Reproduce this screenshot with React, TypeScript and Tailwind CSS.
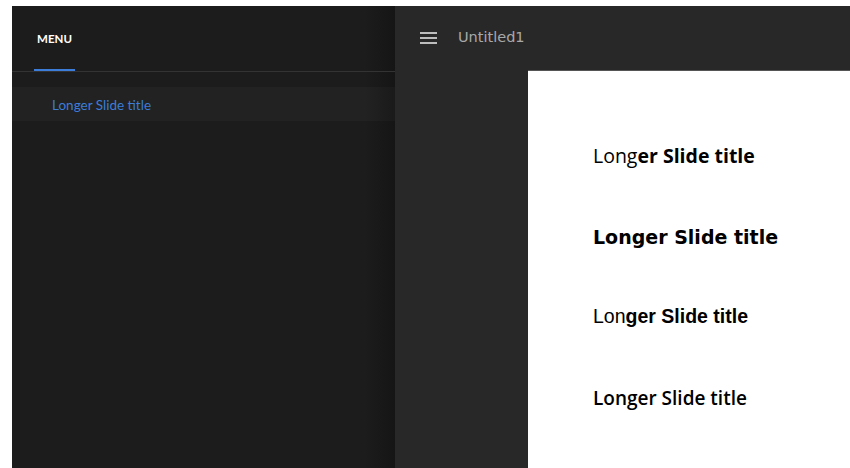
export default function App() {
  return (
    <div className="flex h-[468px] w-[850px] overflow-hidden bg-white pl-[12px] pt-[6px]">
      <aside className="flex w-[383px] shrink-0 flex-col bg-[#1c1c1c] bg-[linear-gradient(to_right,#1c1c1c_calc(100%-30px),#151515)] font-['Lato',sans-serif]">
        <div className="flex h-[66px] border-b border-[#333] pl-[22px]">
          <div className="flex h-full w-[41px] items-center justify-center border-b-2 border-[#3b7dd8]">
            <span className="pt-[3px] text-[11.5px] font-bold text-white">MENU</span>
          </div>
        </div>
        <div className="mt-[15px] flex h-[34px] items-center bg-[#222] bg-[linear-gradient(to_right,#222_calc(100%-30px),#1a1a1a)] pl-[40px] pt-[2px] text-[13.5px] text-[#3b7dd8]">
          Longer Slide title
        </div>
      </aside>
      <main className="flex flex-1 flex-col bg-[#282828]">
        <header className="flex h-[64px] shrink-0 items-center pl-[25px]">
          <div className="flex w-[17px] flex-col gap-[3px]">
            <span className="h-[2px] bg-[#bdbdbd]" />
            <span className="h-[2px] bg-[#bdbdbd]" />
            <span className="h-[2px] bg-[#bdbdbd]" />
          </div>
          <span className="ml-[21px] font-['DejaVu_Sans',sans-serif] text-[14.5px] text-[#a8a8a8]">Untitled1</span>
        </header>
        <div className="flex flex-1">
          <div className="w-[133px] shrink-0" />
          <div className="flex-1 border-t border-[#555] bg-white pl-[65px] text-black">
            <p className="mt-[73px] font-['Open_Sans',sans-serif] text-[19.5px] leading-[24px]">
              <span>Long</span>
              <span className="font-bold">er Slide title</span>
            </p>
            <p className="mt-[57px] font-['DejaVu_Sans',sans-serif] text-[19px] leading-[24px]">
              <span className="font-semibold">Longer </span>
              <span className="font-bold">Slide title</span>
            </p>
            <p className="mt-[55px] font-['Liberation_Sans',sans-serif] text-[19.5px] leading-[24px]">
              <span>Lon</span>
              <span className="font-bold">ger Slide title</span>
            </p>
            <p className="mt-[58px] font-['Open_Sans',sans-serif] text-[19px] font-semibold leading-[24px]">
              Longer Slide title
            </p>
          </div>
        </div>
      </main>
    </div>
  )
}
